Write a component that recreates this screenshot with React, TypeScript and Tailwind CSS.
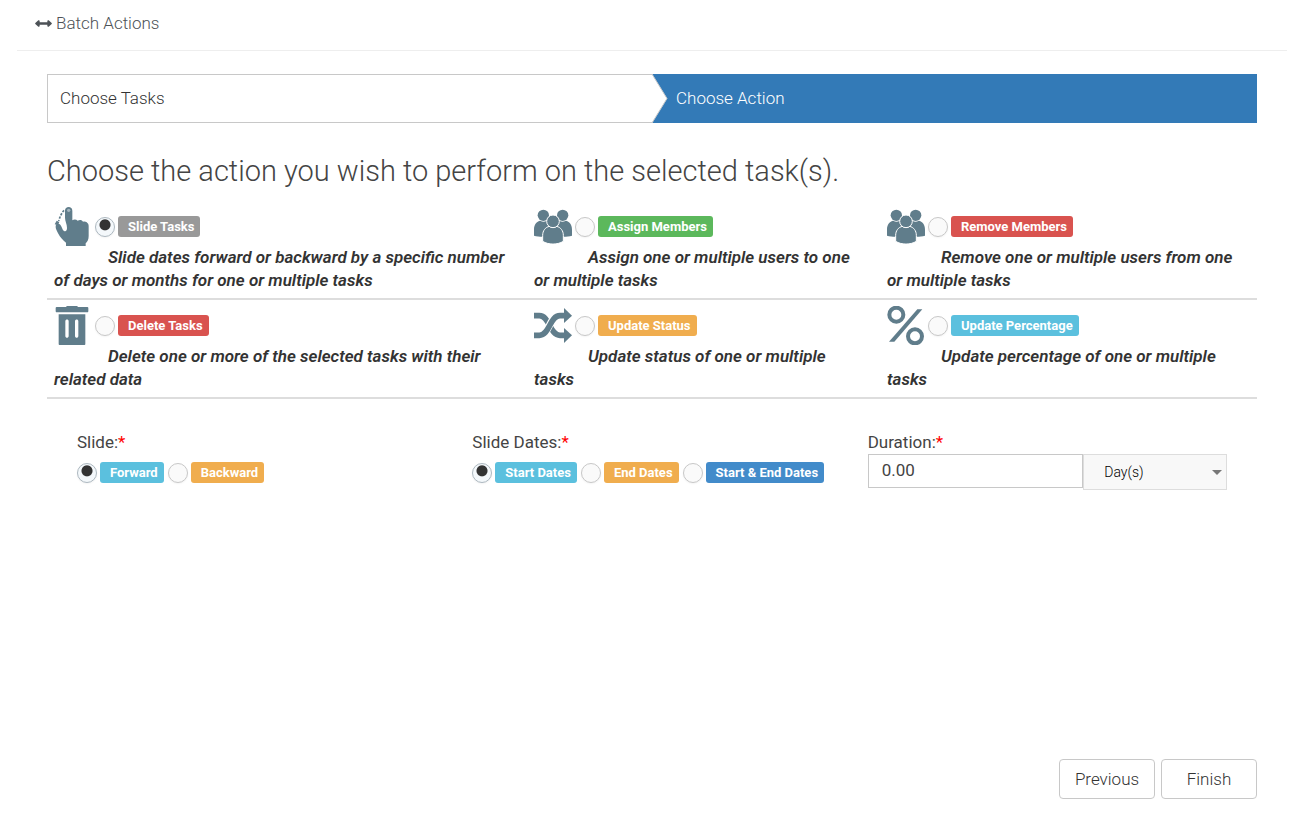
import type { ReactNode } from 'react';

const ICON_CLASS = 'h-[39px] w-[38px] shrink-0 text-[#607d8b]';

function ArrowsIcon() {
  return (
    <svg viewBox="0 0 51 21" className="h-[7px] w-[17px] shrink-0" fill="currentColor" aria-hidden="true">
      <path d="M1 9L10 1c2-1 4 0 4 2v4h23V3c0-2 2-3 4-2l9 8c1 1 1 2 0 3l-9 8c-2 1-4 0-4-2v-4H14v4c0 2-2 3-4 2l-9-8c-1-1-1-2 0-3z" />
    </svg>
  );
}

function SlideIcon() {
  return (
    <svg viewBox="0 0 114 117" className={ICON_CLASS} fill="currentColor" aria-hidden="true">
      <path d="M33 11C33 4 38 0 44 0s11 4 11 11v29c5-4 12-3 16 1 7-4 13-2 16 3 7-2 12 1 14 5 3 3 3 7 3 12v26c0 11-4 17-9 22v8H36v-10c-9-8-18-17-23-27C9 72 4 65 5 57c1-7 9-9 14-4 5 6 6 16 11 19 6 3 9-2 9-9 0-12-6-20-6-31z" />
      <path d="M30 10C23 18 18 28 14 42" fill="none" stroke="currentColor" strokeWidth="5" strokeDasharray="7 4" />
      <path d="M2 52l6-11 8 4-4 10z" />
      <circle cx="44" cy="10" r="5" fill="#a3b5be" />
    </svg>
  );
}

function UsersIcon() {
  return (
    <svg viewBox="0 0 114 117" className={ICON_CLASS} fill="currentColor" aria-hidden="true">
      <circle cx="28" cy="25" r="17" />
      <circle cx="86" cy="25" r="17" />
      <path d="M0 86V68c0-16 8-25 19-27 6 4 13 4 19 0l18 12v32c-18 5-40 5-56 1z" />
      <path d="M114 86V68c0-16-8-25-19-27-6 4-13 4-19 0L58 53v32c18 5 40 5 56 1z" />
      <g stroke="#fff" strokeWidth="3">
        <path d="M26 103V85c0-14 8-24 20-27 7 5 15 5 22 0 12 3 20 13 20 27v18c-18 11-44 11-62 0z" />
        <circle cx="57" cy="43" r="19" />
      </g>
    </svg>
  );
}

function TrashIcon() {
  return (
    <svg viewBox="0 0 114 117" className={ICON_CLASS} fill="currentColor" aria-hidden="true">
      <path d="M8 3h28c1-2 2-3 4-3h28c2 0 3 1 4 3h28c2 0 3 1 3 3v9c0 2-1 4-3 4H8c-2 0-3-2-3-4V6c0-2 1-3 3-3z" />
      <path
        fillRule="evenodd"
        d="M14 25h80v88c0 3-1 4-4 4H18c-3 0-4-1-4-4zM34 46v44c0 7 10 7 10 0V46c0-7-10-7-10 0zm29 0v44c0 7 10 7 10 0V46c0-7-10-7-10 0z"
      />
    </svg>
  );
}

function ShuffleIcon() {
  return (
    <svg viewBox="0 0 114 117" className={ICON_CLASS} fill="currentColor" aria-hidden="true">
      <path d="M90 6l24 23-24 22z" />
      <path d="M90 66l24 22-24 23z" />
      <g fill="none" stroke="currentColor" strokeWidth="17">
        <path d="M0 29h16c32 0 30 59 62 59h16" />
        <path d="M20 88c26-4 26-59 58-59" stroke="#fff" strokeWidth="22" />
        <path d="M0 88h16c32 0 30-59 62-59h16" />
      </g>
    </svg>
  );
}

function PercentIcon() {
  return (
    <svg viewBox="0 0 114 117" className={ICON_CLASS} fill="none" stroke="currentColor" aria-hidden="true">
      <circle cx="28" cy="26" r="21" strokeWidth="12" />
      <circle cx="84" cy="91" r="21" strokeWidth="12" />
      <path d="M6 107h16L106 10H91z" fill="currentColor" stroke="none" />
    </svg>
  );
}

type Choice = {
  label: string;
  color: string;
};

type Action = Choice & {
  description: string;
  icon: ReactNode;
};

const ACTION_ROWS: Action[][] = [
  [
    {
      label: 'Slide Tasks',
      color: 'bg-[#999]',
      description: 'Slide dates forward or backward by a specific number of days or months for one or multiple tasks',
      icon: <SlideIcon />,
    },
    {
      label: 'Assign Members',
      color: 'bg-[#5cb85c]',
      description: 'Assign one or multiple users to one or multiple tasks',
      icon: <UsersIcon />,
    },
    {
      label: 'Remove Members',
      color: 'bg-[#d9534f]',
      description: 'Remove one or multiple users from one or multiple tasks',
      icon: <UsersIcon />,
    },
  ],
  [
    {
      label: 'Delete Tasks',
      color: 'bg-[#d9534f]',
      description: 'Delete one or more of the selected tasks with their related data',
      icon: <TrashIcon />,
    },
    {
      label: 'Update Status',
      color: 'bg-[#f0ad4e]',
      description: 'Update status of one or multiple tasks',
      icon: <ShuffleIcon />,
    },
    {
      label: 'Update Percentage',
      color: 'bg-[#5bc0de]',
      description: 'Update percentage of one or multiple tasks',
      icon: <PercentIcon />,
    },
  ],
];

const DIRECTIONS: Choice[] = [
  { label: 'Forward', color: 'bg-[#5bc0de]' },
  { label: 'Backward', color: 'bg-[#f0ad4e]' },
];

const DATE_OPTIONS: Choice[] = [
  { label: 'Start Dates', color: 'bg-[#5bc0de]' },
  { label: 'End Dates', color: 'bg-[#f0ad4e]' },
  { label: 'Start & End Dates', color: 'bg-[#428bca]' },
];

function RadioLabel({ name, choice, checked }: { name: string; choice: Choice; checked?: boolean }) {
  return (
    <label className="flex items-center gap-[3px]">
      <input
        type="radio"
        name={name}
        defaultChecked={checked}
        className="size-5 shrink-0 appearance-none rounded-full border border-[#c8c8c8] bg-[#fafafa] shadow-xs checked:border-[#adb8c0] checked:bg-[#f4f8fb] checked:bg-[radial-gradient(circle_at_50%_38%,#333_5px,transparent_6px)]"
      />
      <span className={`h-[21px] rounded-[3px] pr-[6px] pl-[10px] text-[13px] leading-[21px] font-bold whitespace-nowrap text-white ${choice.color}`}>
        {choice.label}
      </span>
    </label>
  );
}

function Required() {
  return <span className="text-[#f00]">*</span>;
}

function RadioField({ title, name, choices }: { title: string; name: string; choices: Choice[] }) {
  return (
    <fieldset>
      <legend className="leading-6">
        {title}
        <Required />
      </legend>
      <div className="mt-2 flex flex-wrap gap-1">
        {choices.map((choice, i) => (
          <RadioLabel key={choice.label} name={name} choice={choice} checked={i === 0} />
        ))}
      </div>
    </fieldset>
  );
}

export default function App() {
  return (
    <div className="flex min-h-screen flex-col bg-white font-[Roboto,sans-serif] text-[17px] text-[#333]">
      <header className="mr-5 ml-[17px] border-b border-[#eee] px-[18px] pt-3 pb-4">
        <h1 className="flex items-center gap-1 leading-[22px] font-light text-[#4d5257]">
          <ArrowsIcon />
          Batch Actions
        </h1>
      </header>

      <main className="flex grow flex-col pt-[23px] pr-[50px] pb-[26px] pl-[47px]">
        <ol className="grid grid-cols-2 leading-[47px] font-light">
          <li className="border border-r-0 border-[#c8c8c8] pl-3">Choose Tasks</li>
          <li className="relative border border-[#337ab7] bg-[#337ab7] pl-[23px] text-white">
            <svg viewBox="0 0 16 49" className="absolute -top-px -left-px h-[49px] w-4" aria-hidden="true">
              <path d="M0 0L15 24.500L0 49z" fill="#fff" />
              <path d="M0 0L15 24.500L0 49" fill="none" stroke="#c8c8c8" />
            </svg>
            Choose Action
          </li>
        </ol>

        <h2 className="mt-7 text-[29px] leading-10 font-light text-[#444]">
          Choose the action you wish to perform on the selected task(s).
        </h2>

        <div className="mt-[10px]">
          {ACTION_ROWS.map((row) => (
            <div key={row[0].label} className="grid grid-cols-[480fr_353fr_377fr] border-b-2 border-[#ddd]">
              {row.map((action) => (
                <div key={action.label} className="py-[6px] pr-[14px] pl-[7px]">
                  <div className="flex items-center gap-[3px]">
                    {action.icon}
                    <RadioLabel name="action" choice={action} checked={action.label === 'Slide Tasks'} />
                  </div>
                  <p className="indent-[54px] leading-[23px] font-semibold italic">{action.description}</p>
                </div>
              ))}
            </div>
          ))}
        </div>

        <form className="mt-[31px] grid grid-cols-3 gap-9 px-[30px] text-[#444]">
          <RadioField title="Slide:" name="direction" choices={DIRECTIONS} />
          <RadioField title="Slide Dates:" name="dates" choices={DATE_OPTIONS} />
          <div>
            <label htmlFor="duration" className="block leading-6">
              Duration:
              <Required />
            </label>
            <div className="flex items-start">
              <input
                id="duration"
                type="text"
                defaultValue="0.00"
                className="h-[34px] w-3/5 border border-[#c8c8c8] px-[13px] pb-[2px]"
              />
              <div className="relative w-2/5">
                <select
                  aria-label="Duration unit"
                  className="h-9 w-full appearance-none border border-[#ddd] bg-[#f8f8f8] pr-6 pl-5 text-[14px] font-light text-black"
                >
                  <option>Day(s)</option>
                </select>
                <svg viewBox="0 0 10 5" className="pointer-events-none absolute top-4 right-[5px] h-[5px] w-[10px]" aria-hidden="true">
                  <path d="M0 0h10L5 5z" fill="#777" />
                </svg>
              </div>
            </div>
          </div>
        </form>

        <div className="mt-auto flex justify-end gap-[6px] pt-8 font-light">
          <button type="button" className="h-10 w-24 rounded border border-[#c8c8c8] pt-px">
            Previous
          </button>
          <button type="button" className="h-10 w-24 rounded border border-[#c8c8c8] pt-px">
            Finish
          </button>
        </div>
      </main>
    </div>
  );
}
